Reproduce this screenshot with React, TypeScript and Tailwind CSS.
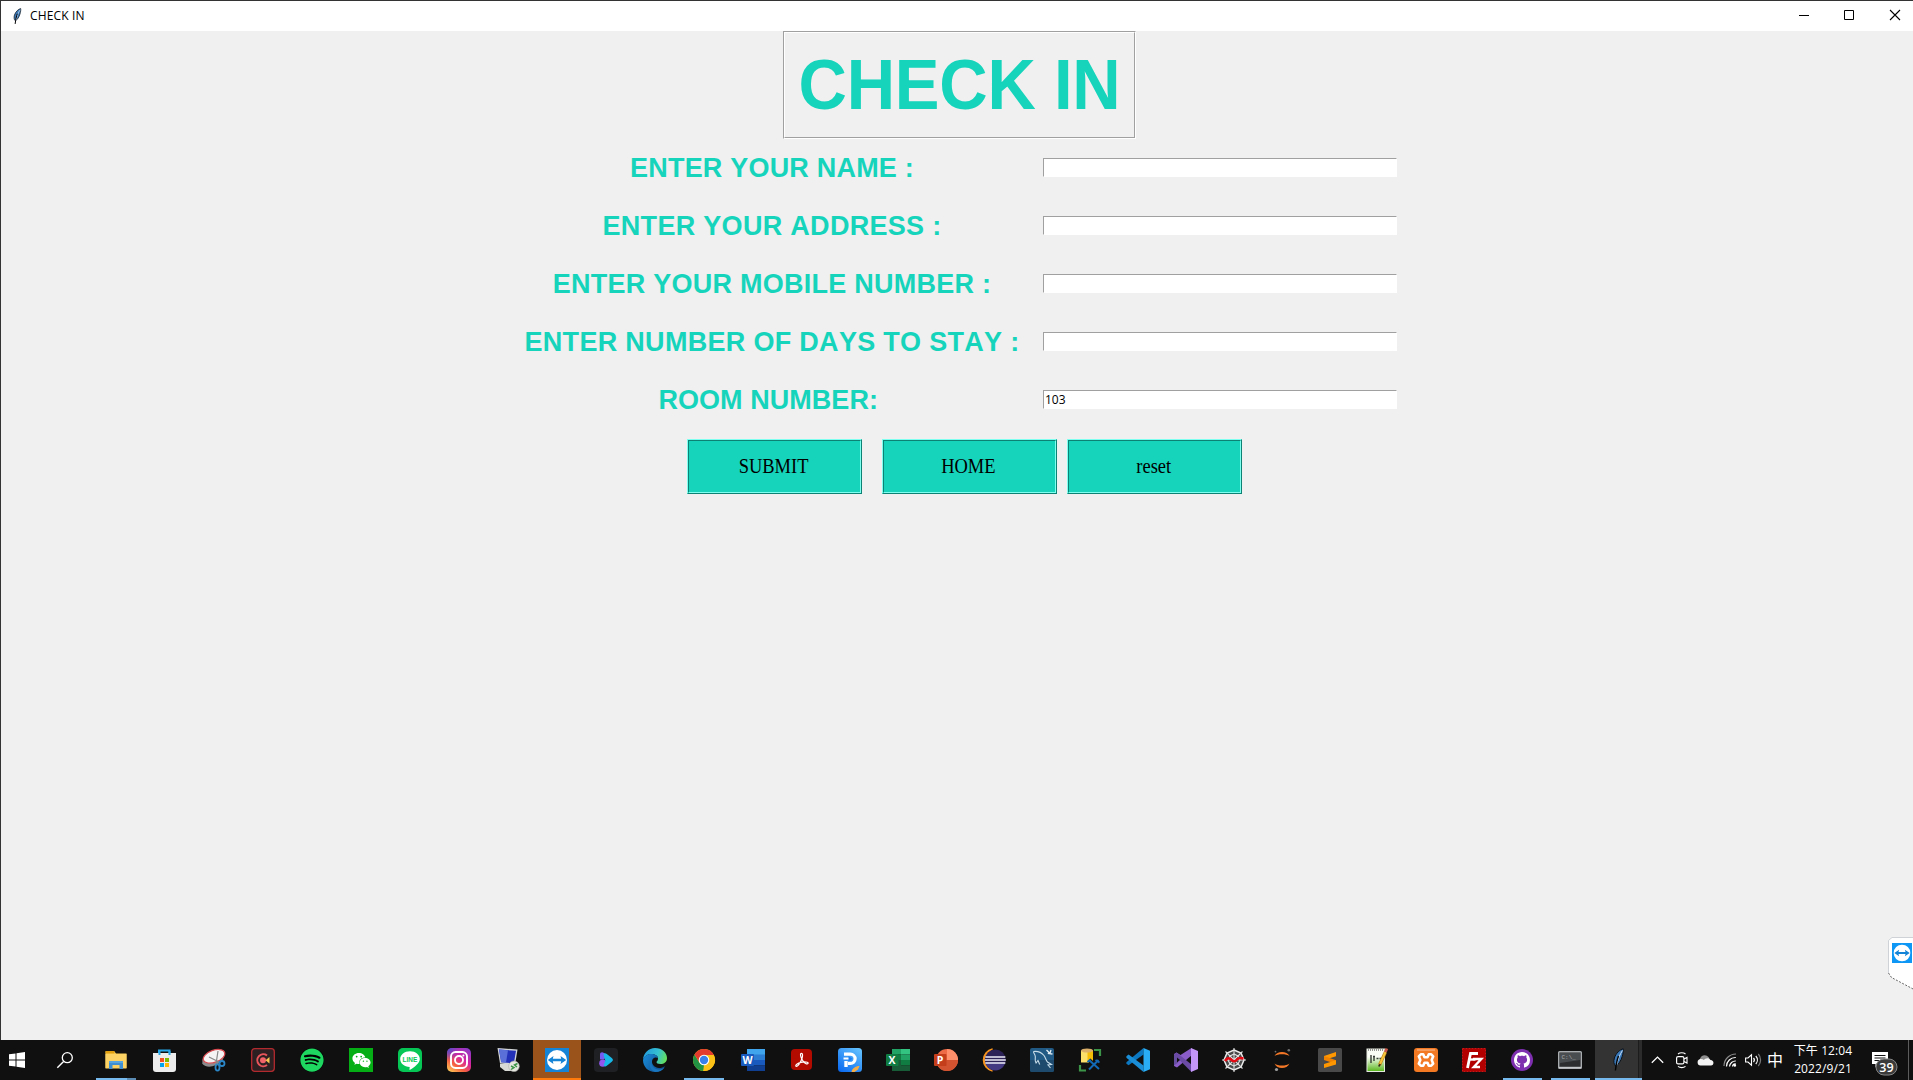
import React from "react";
import { FaSpotify, FaWeixin } from "react-icons/fa6";

const Svg = ({ children, w = 24, h = 24 }: { children: React.ReactNode; w?: number; h?: number }) => (
  <svg width={w} height={h} viewBox={`0 0 ${w} ${h}`} className="block shrink-0 overflow-visible" fill="none">
    {children}
  </svg>
);

const Feather = ({ w, h }: { w: number; h: number }) => (
  <svg width={w} height={h} viewBox="0 0 12 24" className="block shrink-0" fill="none">
    <path d="M11.2.8C8 1.6 4 5 2.4 10c-1 3.500-.6 6.500 1.200 8 3-1.200 5.400-5.500 6.600-9.500C11 5.500 11.600 3 11.200.8Z" fill="#3a78b8" stroke="#0d1218" strokeWidth="1" />
    <path d="M10.500 2.500C8 6 6 11 4.600 17.500" stroke="#cfe4f7" strokeWidth="1" />
    <path d="M6.500 8C5 12 4.200 16 3.400 22.500" stroke="#050505" strokeWidth="1.400" />
  </svg>
);

const Explorer = () => (
  <Svg>
    <path d="M1.500 3.500h9l1.500 2h10.500v14.500h-21Z" fill="#fcce56" />
    <path d="M1.500 3h9v2.500h-9Z" fill="#e0a010" />
    <path d="M1.500 6h21v14.500h-21Z" fill="#fdd265" />
    <path d="M5 21v-8h14v8h-3.500v-4h-7v4Z" fill="#3f8fd0" />
    <path d="M5 13h14v2H5Z" fill="#56a4e0" />
  </Svg>
);
const Store = () => (
  <Svg>
    <path d="M6 6V2.500h10.500V6" stroke="#26a6e8" strokeWidth="2" />
    <path d="M0 5h23v16a3 3 0 0 1-3 3H3a3 3 0 0 1-3-3Z" fill="#ececec" />
    <path d="M5.500 3h2v4h-2zM15.500 3h2v4h-2z" fill="#26a6e8" />
    <path d="M7 10h4v4H7z" fill="#f25022" /><path d="M12 10h4v4h-4z" fill="#7fba00" />
    <path d="M7 15h4v4H7z" fill="#00a4ef" /><path d="M12 15h4v4h-4z" fill="#ffb900" />
  </Svg>
);
const Snip = () => (
  <Svg>
    <ellipse cx="11" cy="11" rx="11.500" ry="6.800" transform="rotate(-22 11 11)" fill="#8b8b8d" />
    <ellipse cx="12" cy="8.300" rx="11.300" ry="6" transform="rotate(-20 12 8.300)" fill="#f5f3f3" stroke="#d84a50" strokeWidth="1.200" />
    <path d="m7 9 10 5M16 3l-2 13" stroke="#888" strokeWidth="1.200" />
    <circle cx="20" cy="15.500" r="2.500" stroke="#2b86c7" strokeWidth="1.800" />
    <ellipse cx="15.500" cy="19.500" rx="2" ry="3.200" stroke="#2b86c7" strokeWidth="1.800" />
  </Svg>
);
const Recorder = () => (
  <Svg>
    <rect x=".7" y=".7" width="22.600" height="22.600" rx="3" fill="#2c2022" stroke="#b32a2e" strokeWidth="1.300" />
    <path d="M16 7.500A6 6 0 1 0 16 17" stroke="#e8565c" strokeWidth="2" />
    <circle cx="12" cy="12.300" r="3" fill="#f0646a" />
    <path d="M14.500 12.300 18.500 9v6.600Z" fill="#f8c850" />
  </Svg>
);
const Spotify = () => (
  <div className="size-6 rounded-full bg-black"><FaSpotify className="size-6 text-[#1ed760]" /></div>
);
const WeChat = () => (
  <div className="flex size-6 items-center justify-center bg-[#06ae16]"><FaWeixin className="size-[19px] text-white" /></div>
);
const Line = () => (
  <Svg>
    <rect width="24" height="24" rx="5" fill="#06c755" />
    <path d="M12 3.200c5.500 0 9.800 3.500 9.800 7.900 0 4-5 8-9.700 10.700-.6.300-.8-.2-.6-1l.2-1.700C6.200 18.900 2.200 15.500 2.200 11.100c0-4.400 4.300-7.900 9.800-7.900Z" fill="#fff" />
    <text x="12" y="13.800" textAnchor="middle" fontFamily="Liberation Sans" fontWeight="700" fontSize="6.500" fill="#06c755">LINE</text>
  </Svg>
);
const Instagram = () => (
  <Svg>
    <defs>
      <linearGradient id="ig" x1="3" y1="24" x2="20" y2="0" gradientUnits="userSpaceOnUse">
        <stop offset="0" stopColor="#fec956" /><stop offset=".3" stopColor="#f56040" />
        <stop offset=".6" stopColor="#d6249f" /><stop offset="1" stopColor="#8a3ac8" />
      </linearGradient>
      <radialGradient id="igb" cx="0" cy="0" r="13" gradientUnits="userSpaceOnUse">
        <stop offset="0" stopColor="#3c55d5" /><stop offset="1" stopColor="#3c55d5" stopOpacity="0" />
      </radialGradient>
    </defs>
    <rect width="24" height="24" rx="5" fill="url(#ig)" /><rect width="24" height="24" rx="5" fill="url(#igb)" />
    <rect x="4" y="4" width="16" height="16" rx="4.500" stroke="#fff" strokeWidth="1.900" />
    <circle cx="12" cy="12" r="4" stroke="#fff" strokeWidth="1.900" /><circle cx="16.400" cy="7.600" r="1" fill="#fff" />
  </Svg>
);
const RemoteDesktop = () => (
  <Svg>
    <path d="M4 16h12l6 4-2 3H9l-5-4Z" fill="#d9d9d6" />
    <path d="m1.500 0 20 1.500-2.500 15.500L4 15.500Z" fill="#d3d6d8" />
    <path d="m3 1.500 17 1.300-2.200 12.700-12.600-1.300Z" fill="#2330b8" />
    <path d="m3 1.500 9 .7-2 12.300-4.800-.3Z" fill="#5a6fd8" />
    <circle cx="18" cy="18.300" r="5.300" fill="#e5e6df" stroke="#a9aba4" strokeWidth=".6" />
    <path d="m15 18 3 1.500-3 2M21.500 15.500l-3 1.500 2.500 2" stroke="#3d9648" strokeWidth="1.500" />
  </Svg>
);
const TeamViewer = ({ s = 24 }: { s?: number }) => (
  <svg width={s} height={s} viewBox="0 0 24 24" className="block shrink-0">
    <rect width="24" height="24" fill={s === 24 ? "#1583d6" : "#0f97f5"} /><circle cx="12" cy="12" r="10" fill="#fff" />
    <path d="m2.800 12 5.700-4-.7 2.800h8.400L15.500 8l5.700 4-5.700 4 .7-2.800H7.800l.7 2.800Z" fill="#1583d6" />
  </svg>
);
const Player = () => (
  <Svg>
    <rect width="24" height="24" rx="4" fill="#1e2023" />
    <path d="M6 6.500c0-2.300 2.200-2.800 4-1.500l3 2.500-3 4H6Z" fill="#745cf2" />
    <circle cx="8.800" cy="15.200" r="3.600" fill="#9256ee" />
    <path d="M9.500 6.500c.5-1.500 2-1.500 3.300-.5l5 4c1.500 1.200 1.500 2.600 0 3.800l-5 4c-1.300 1-2.800.8-3-1l1.500-4Z" fill="#17b8e8" />
  </Svg>
);
const Edge = () => (
  <Svg>
    <defs>
      <linearGradient id="e1" x1="2" y1="4" x2="23" y2="12" gradientUnits="userSpaceOnUse"><stop stopColor="#249edb" /><stop offset=".55" stopColor="#35c1d2" /><stop offset="1" stopColor="#66e05a" /></linearGradient>
      <linearGradient id="e2" x1="0" y1="10" x2="20" y2="22" gradientUnits="userSpaceOnUse"><stop stopColor="#1888d5" /><stop offset="1" stopColor="#114a8b" /></linearGradient>
    </defs>
    <path d="M0 12C.3 5 5.500 0 12 0c7 0 12 4.600 12 10 0 4-3 6-6.500 6-3 0-4-1-4-2 0-.7 1.500-1 1.500-3.500C15 7.500 11.500 6 8.500 6 4 6 .8 9 0 12Z" fill="url(#e1)" />
    <path d="M0 12c1-3.600 4-6 8.500-6 3.500 0 6.300 2 6.500 4.300-1-1-4-1.300-5.400 1C7.500 15 11 20 16 20c2.300 0 4.500-1 6.200-1.800C20 22 16 24 12 24 5.500 24 0 19 0 12Z" fill="url(#e2)" />
    <path d="M9 12c-2 5 2 9.500 7 9.500 2 0 4-.8 5.500-2-2 3.300-5.500 4.500-9 4.500C7 23 5 16 9 12Z" fill="#1975bd" />
  </Svg>
);
const Chrome = () => (
  <Svg>
    <circle cx="12" cy="12" r="11" fill="#fbc116" />
    <path d="M2.470 6.500 7.500 14.700 12 17l-.8 6A11 11 0 0 1 2.470 6.500Z" fill="#229342" />
    <path d="M12 7h9.800A11 11 0 0 1 11.200 23l5-8.500Z" fill="#fbc116" />
    <path d="M2.470 6.500A11 11 0 0 1 21.900 7H12l-4.500 7.500Z" fill="#e33b2e" />
    <circle cx="12" cy="12" r="5.300" fill="#fff" /><circle cx="12" cy="12" r="4.200" fill="#3a80ea" />
  </Svg>
);
const Letter = ({ c, y = 15.700, x = 6 }: { c: string; y?: number; x?: number }) => (
  <text x={x} y={y} textAnchor="middle" fontFamily="Open Sans" fontWeight="700" fontSize="10.500" fill="#fff">{c}</text>
);
const Word = () => (
  <Svg>
    <path d="M6 1h18v6H6z" fill="#41a5ee" /><path d="M6 6.500h18V12H6z" fill="#2b7cd3" />
    <path d="M6 12h18v5.500H6z" fill="#185abd" /><path d="M6 17.500h18V23H6z" fill="#103f91" />
    <rect y="6" width="13" height="12" rx="1" fill="#185abd" /><Letter c="W" x={6.500} />
  </Svg>
);
const Acrobat = () => (
  <Svg>
    <rect x="1" y="1" width="21" height="21" rx="4" fill="#b30b00" />
    <path d="M11.500 5.300c-1.800 0-.9 3.800 1 6.900 1.800 3 4.800 4.600 5.500 3.300.9-1.600-3.800-2-7-1.200-3.500.9-6 3-5 3.900 1.400 1.200 4.500-3.400 6-7.700.9-2.700.7-5.200-.5-5.200Z" stroke="#fff" strokeWidth="1.200" />
  </Svg>
);
const PdfEditor = () => (
  <Svg>
    <defs><linearGradient id="pe" x1="4" y1="24" x2="22" y2="0" gradientUnits="userSpaceOnUse"><stop stopColor="#0c6cf0" /><stop offset="1" stopColor="#66c4ff" /></linearGradient></defs>
    <rect width="24" height="24" rx="3.500" fill="url(#pe)" />
    <path d="M6 6.200h6.500a4.500 4.500 0 0 1 0 9.200H10" stroke="#fff" strokeWidth="3.200" /><path d="M8 13V19" stroke="#fff" strokeWidth="3.400" />
    <path d="M5.500 10.500H12" stroke="#fff" strokeWidth="2" /><path d="m10.500 8 4 2.800-4 2.800Z" fill="#1d7ef0" />
    <path d="M13.500 24c.5-3.500 4-6 8-6l-1.500 3.500L16.500 24Z" fill="#f6ae48" />
  </Svg>
);
const Excel = () => (
  <Svg>
    <path d="M6 1h9.500v5.500H6z" fill="#21a366" /><path d="M15 1h9v5.500h-9z" fill="#33c481" />
    <path d="M6 6.500h9V12H6z" fill="#107c41" /><path d="M15 6.500h9V12h-9z" fill="#21a366" />
    <path d="M6 12h9v11H6z" fill="#185c37" /><path d="M15 12h9v5.500h-9z" fill="#107c41" /><path d="M15 17.500h9V23h-9z" fill="#185c37" />
    <rect y="6" width="12.500" height="12" rx="1" fill="#107c41" /><Letter c="X" />
  </Svg>
);
const PowerPoint = () => (
  <Svg>
    <circle cx="13" cy="12" r="11" fill="#ed6c47" /><path d="M13 1a11 11 0 0 1 11 11H13Z" fill="#ff8f6b" />
    <path d="M2 12h22a11 11 0 0 1-22 0Z" fill="#d35230" />
    <rect y="6" width="12.500" height="12" rx="1" fill="#c43e1c" /><Letter c="P" />
  </Svg>
);
const Eclipse = () => (
  <Svg>
    <path d="M10.500.9A11.300 11.300 0 0 0 10.500 23.100A12.500 12.500 0 0 1 10.500.9Z" fill="#f7941e" stroke="#f7941e" strokeWidth="1.200" />
    <circle cx="13.300" cy="12" r="10.500" fill="#2c2255" />
    <path d="M3.300 14h20c-1.200 5-5 8.300-10 8.300s-9-3.300-10-8.300Z" fill="#433a83" />
    <path d="M3.300 9h20M2.800 12h21M3.300 15h20" stroke="#eceaf5" strokeWidth="1.400" />
  </Svg>
);
const MySql = () => (
  <Svg>
    <rect width="24" height="24" rx="2" fill="#215a84" /><path d="M0 12h24v10a2 2 0 0 1-2 2H2a2 2 0 0 1-2-2Z" fill="#1d4a6d" />
    <path d="M3.500 3.500c4-.5 8 1 10.500 4 1.500 2 2 5 3.500 6.500l4 2.500-3.500.5 2.500 3M3.500 3.500c0 2 1.500 2.500 1.800 5 .2 2.500-.8 4.500.7 6.500l2-2.500c.8 1.300 1 2.800 1.800 4" stroke="#c7dce9" strokeWidth="1.100" />
    <path d="m16.500 2 2.500 2.500-.5 1 4 .5M21 2l-1 3" stroke="#e3edf3" strokeWidth="1.300" />
  </Svg>
);
const SqlTools = () => (
  <Svg>
    <path d="M16 2h6v6M2 17v5.500h6" stroke="#3c9448" strokeWidth="2.200" />
    <path d="M3 2.500h11.500v12H3z" fill="#fde06a" /><path d="M9.500 2.500H15v12H9.500z" fill="#f5bd08" />
    <ellipse cx="9" cy="2.500" rx="6" ry="2" fill="#ddb06a" />
    <path d="m11 12 10 9M20.500 12 11 21.500M18 11.500l4 3.500" stroke="#111" strokeWidth="4" />
    <path d="m11 12 10 9M20.500 12 11 21.500M9.500 14l3-2.500M17.500 12l4 2.500" stroke="#1269b5" strokeWidth="2" />
  </Svg>
);
const VsCode = () => (
  <Svg>
    <path d="M.4 14.200 17.500 0v6.500L2.600 17.200.4 15.700Z" fill="#0c78c2" />
    <path d="M.4 8.300 2.600 6.500 17.500 17.500V24L.4 9.800Z" fill="#1a8fd8" />
    <path d="M17.500 0 24 2.800v18.400L17.500 24Z" fill="#29adf5" />
  </Svg>
);
const VisualStudio = () => (
  <Svg>
    <path d="m0 6 2.500-1.500 4 2.500 11-7v7.500L3 19.500 0 18Z" fill="#8a5cc8" />
    <path d="M0 6.500 3.500 9v6L0 17.500Z" fill="#674ea0" />
    <path d="M0 6.500 2.500 4.500 17.500 16.500V24Z" fill="#6a4aa5" />
    <path d="M17 0 24 3v18l-7 3Z" fill="#c496f8" />
    <path d="m3 9.500 3 2.500-3 2.500Z" fill="#111" />
  </Svg>
);
const Spyder = () => (
  <Svg>
    <path d="m12 2 7 3 3 7-3 7-7 3-7-3-3-7 3-7Z" fill="#484848" stroke="#ececec" strokeWidth="1.500" />
    <path d="M12 0v24M0 12h24M3.500 3.500l17 17M20.500 3.500l-17 17" stroke="#dedede" strokeWidth="1.100" />
    <path d="m12 6 4 2 2 4-2 4-4 2-4-2-2-4 2-4Z" stroke="#e4e4e4" strokeWidth="1.100" />
    <path d="M3 13c2-3 4-3.500 6-1.500s4 2.500 6 0 4-1.500 6.500-1" stroke="#e50914" strokeWidth="2.600" />
  </Svg>
);
const Jupyter = () => (
  <Svg>
    <path d="M4.500 8C7 2.500 17 2.500 19.500 8 16 5.500 8 5.500 4.500 8Z" fill="#f37726" />
    <path d="M4.500 15.500c2.500 6 12.500 6 15 0-3.500 2.800-11.500 2.800-15 0Z" fill="#f37726" />
    <circle cx="18.800" cy="2.300" r="1.300" fill="#717171" /><circle cx="6.500" cy="21.500" r="1.600" fill="#9e9e9e" /><circle cx="5.500" cy="3.600" r=".9" fill="#717171" />
  </Svg>
);
const Sublime = () => (
  <Svg>
    <rect width="24" height="24" rx="1.500" fill="#494949" />
    <path d="M18 4v4.300L6 12V8Z" fill="#ff9800" /><path d="m6 8 12 4.300V16L6 12Z" fill="#f08200" /><path d="M18 12.300v4.200L6 20v-4Z" fill="#ff9800" />
  </Svg>
);
const NotepadPP = () => (
  <Svg>
    <defs><linearGradient id="np" x1="0" y1="0" x2="0" y2="1"><stop offset=".35" stopColor="#fafdf5" /><stop offset="1" stopColor="#55b518" /></linearGradient></defs>
    <rect x="1" y="1" width="17.500" height="22.500" fill="url(#np)" stroke="#e3e9df" />
    <path d="M2 2h15" stroke="#777" strokeWidth="1.500" strokeDasharray="1 1" />
    <path d="M5 7v8M7 8.500h2M8 8v5M10.500 10.500h2M13.500 10.500h2" stroke="#363c36" strokeWidth="1.400" />
    <path d="m13.500 17 6-13" stroke="#c08a1c" strokeWidth="3.200" /><path d="m13.500 17 6-13" stroke="#f8c63c" strokeWidth="1.800" />
    <path d="m19.300 4 1.500-3.500" stroke="#c85a4c" strokeWidth="3" /><path d="m12.700 18.500 1.600-2.500" stroke="#362a1c" strokeWidth="1.500" />
  </Svg>
);
const Xampp = () => (
  <Svg>
    <rect width="24" height="24" rx="3" fill="#f37923" /><path d="M3 2h18" stroke="#f9c29a" strokeWidth="1" />
    <path d="M6.800 6.300h2.400l1.300 3h3l1.300-3h2.400l2 2-1.500 3.700 1.500 3.700-2 2h-2.400l-1.300-3h-3l-1.300 3H6.800l-2-2L6.300 12 4.800 8.300Z" stroke="#fff" strokeWidth="2.600" strokeLinejoin="round" />
  </Svg>
);
const FileZilla = () => (
  <Svg>
    <rect x=".5" y=".5" width="23" height="23" fill="#b20000" stroke="#d01212" strokeDasharray="2 1" />
    <path d="M5.500 20 8.500 5.500H16" stroke="#fff" strokeWidth="2.800" /><path d="M6.500 11.500h7" stroke="#fff" strokeWidth="2.400" />
    <path d="M11 11h8.300l-7.500 8H18" stroke="#fff" strokeWidth="2.400" />
  </Svg>
);
const GitHub = () => (
  <div className="flex size-6 items-center justify-center">
    <div className="flex size-[22px] items-center justify-center rounded-full bg-[#7d2fb0]">
      <svg width="16" height="16" viewBox="0 0 16 16"><path fill="#fff" d="M8 0C3.580 0 0 3.580 0 8c0 3.540 2.290 6.530 5.470 7.590.4.070.55-.17.55-.38 0-.19-.01-.82-.01-1.490-2.010.37-2.530-.49-2.690-.94-.09-.23-.48-.94-.82-1.130-.28-.15-.68-.52-.01-.53.63-.01 1.080.58 1.230.82.72 1.210 1.870.87 2.330.66.070-.52.280-.87.510-1.070-1.780-.2-3.640-.89-3.640-3.950 0-.87.310-1.590.82-2.150-.08-.2-.36-1.020.08-2.120 0 0 .67-.21 2.200.82.640-.18 1.320-.27 2-.27s1.360.09 2 .27c1.530-1.040 2.200-.82 2.200-.82.440 1.100.160 1.920.080 2.120.510.560.820 1.270.820 2.150 0 3.070-1.870 3.750-3.650 3.950.290.250.540.730.540 1.480 0 1.070-.01 1.930-.01 2.200 0 .210.150.460.550.380A8.010 8.010 0 0 0 16 8c0-4.420-3.580-8-8-8Z" /></svg>
    </div>
  </div>
);
const Cmd = () => (
  <Svg>
    <rect x=".7" y="3.700" width="22.600" height="16.600" rx=".8" fill="#2b2d2f" stroke="#a9acae" strokeWidth="1.400" />
    <path d="M2 5h20v7L2 15Z" fill="#4a4d50" /><path d="M1 19.500h22" stroke="#c5c8ca" strokeWidth="1.400" />
    <text x="3.500" y="11" fontFamily="Liberation Mono" fontSize="6" fill="#a8abac">C:\_</text>
  </Svg>
);
const Tk = () => <div className="flex w-6 justify-center"><Feather w={12} h={24} /></div>;

type Task = { icon: React.FC; bar?: string; bg?: string };
const wide: Task[] = [
  { icon: Store }, { icon: Snip }, { icon: Recorder }, { icon: Spotify }, { icon: WeChat }, { icon: Line },
  { icon: Instagram }, { icon: RemoteDesktop }, { icon: TeamViewer as React.FC, bar: "ml-px w-12 bg-[#ff7a0a]", bg: "bg-[linear-gradient(90deg,#101010_1px,#9b531c_1px)]" },
  { icon: Player }, { icon: Edge }, { icon: Chrome, bar: "ml-[5px] w-10 bg-[#76b9ed]" }, { icon: Word }, { icon: Acrobat },
];
const narrow: Task[] = [
  { icon: PdfEditor }, { icon: Excel }, { icon: PowerPoint }, { icon: Eclipse }, { icon: MySql }, { icon: SqlTools },
  { icon: VsCode }, { icon: VisualStudio }, { icon: Spyder }, { icon: Jupyter }, { icon: Sublime }, { icon: NotepadPP },
  { icon: Xampp }, { icon: FileZilla }, { icon: GitHub, bar: "ml-[5px] w-[39px] bg-[#76b9ed]" },
  { icon: Cmd, bar: "ml-[5px] w-[39px] bg-[#76b9ed]" },
  { icon: Tk, bar: "ml-px w-[47px] bg-[#76b9ed]", bg: "bg-[linear-gradient(90deg,#101010_1px,#333_1px,#333_44px,#1c1c1c_44px,#1c1c1c_45px,#2b2b2b_45px)]" },
];
const TaskButton = ({ t, cls }: { t: Task; cls: string }) => (
  <div className={`flex h-10 shrink-0 flex-col justify-between pt-2 ${cls} ${t.bg ?? ""}`}>
    <div className="h-6 pl-3"><t.icon /></div>
    <div className={`h-[2px] ${t.bar ?? ""}`} />
  </div>
);

const Taskbar = () => (
  <div className="flex h-10 w-full bg-[#101010]">
    <div className="flex h-10 w-[34px] shrink-0 items-center justify-center">
      <Svg w={16} h={16}><path d="M0 2.300 6.500 1.400v6.100H0ZM7.500 1.200 16 0v7.500H7.500ZM0 8.500h6.500v6.100L0 13.700ZM7.500 8.500H16V16l-8.500-1.200Z" fill="#fff" /></Svg>
    </div>
    <div className="flex h-10 w-[62px] shrink-0 items-center justify-center">
      <Svg w={16} h={16}><circle cx="10.300" cy="5.700" r="5" stroke="#fff" strokeWidth="1.300" /><path d="M6.600 9.400.3 15.700" stroke="#fff" strokeWidth="1.400" /></Svg>
    </div>
    <div className="mr-1 flex h-10 w-10 shrink-0 flex-col justify-between pt-2">
      <div className="pl-2"><Explorer /></div>
      <div className="flex h-[2px]"><div className="w-[31px] bg-[#76b9ed]" /><div className="w-[9px] bg-[#5a8cb4]" /></div>
    </div>
    {wide.map((t, i) => <TaskButton key={i} t={t} cls="w-[49px] [&>div:first-child]:pl-[13px]" />)}
    {narrow.map((t, i) => <TaskButton key={i} t={t} cls="w-12" />)}
    <div className="flex flex-1 items-center pl-[9px]">
      <Svg w={13} h={8}><path d="m.8 6.800 5.700-5.700 5.700 5.700" stroke="#fff" strokeWidth="1.300" /></Svg>
      <div className="ml-[12px]"><Svg w={12} h={16}>
        <rect x=".6" y="4.600" width="7.300" height="7.300" rx="1.500" stroke="#fff" strokeWidth="1.200" /><path d="m8 7 3-1.600v5.700L8 9.500" stroke="#fff" strokeWidth="1.100" />
        <path d="M2 2C4 .3 7.500.3 9.500 2M2 14.300c2 1.700 5.500 1.700 7.500 0" stroke="#fff" strokeWidth="1.100" />
      </Svg></div>
      <div className="ml-[9px]"><Svg w={17} h={12}>
        <path d="M3 8a5 5 0 0 1 9.500-3.500L8 9Z" fill="#8f8f8f" /><path d="M3.500 11.500a3.300 3.300 0 0 1-.3-6.500c1.500-.3 2.800.2 3.800 1 1-2 5-2.800 6.500 0 4 .2 3.800 5.500.5 5.500Z" fill="#f3f3f3" />
      </Svg></div>
      <div className="ml-[9px]"><Svg w={14} h={14}>
        <path d="M1 13A12 12 0 0 1 13 1" stroke="#8a8a8a" strokeWidth="1.200" />
        <path d="M3.500 13.500A9 9 0 0 1 12.800 4.500M6.500 13.500a6 6 0 0 1 6.300-5.500M9.500 13.500a3 3 0 0 1 3.300-2.500" stroke="#fff" strokeWidth="1.200" /><circle cx="11.800" cy="12.400" r="1.300" fill="#fff" />
      </Svg></div>
      <div className="ml-[8px]"><Svg w={17} h={14}>
        <path d="M.6 5h2.400l3.500-3.200v10.400L3 9H.6Z" stroke="#fff" strokeWidth="1.100" />
        <path d="M8.500 5a3 3 0 0 1 0 4M10.800 3a6 6 0 0 1 0 8" stroke="#fff" strokeWidth="1.200" /><path d="M13.300 1a9 9 0 0 1 0 12" stroke="#777" strokeWidth="1.200" />
      </Svg></div>
      <div className="ml-[5px] w-4 pb-[2px] font-['Noto_Sans_CJK_TC',sans-serif] text-[16px] leading-[20px] text-white">中</div>
      <div className="ml-[8px] flex w-[64px] flex-col items-center font-['Open_Sans','Noto_Sans_CJK_TC',sans-serif] text-[12px] leading-[18px] tracking-[0.1px] whitespace-nowrap text-white">
        <span>下午 12:04</span><span>2022/9/21</span>
      </div>
      <div className="ml-[17px]"><Svg w={28} h={26}>
        <path d="M0 5h16v12H7l-3.500 3.500V17H0Z" fill="#fff" /><path d="M2.500 8.500h11M2.500 11h11M2.500 13.500h7" stroke="#101010" strokeWidth="1" />
        <rect x="4" y="12" width="21" height="16" rx="8" fill="#3b3b3b" stroke="#858585" />
        <text x="14.500" y="24.500" textAnchor="middle" fontFamily="Open Sans" fontWeight="600" fontSize="12.500" fill="#fff">39</text>
      </Svg></div>
      <div className="mr-1 ml-auto h-10 w-px bg-[#5c5c5c]" />
    </div>
  </div>
);

const rows = [
  { label: "ENTER YOUR NAME :", value: "", ls: "tracking-[0.2px]" },
  { label: "ENTER YOUR ADDRESS :", value: "", ls: "tracking-[0.3px]" },
  { label: "ENTER YOUR MOBILE NUMBER :", value: "", ls: "tracking-[0.25px]" },
  { label: "ENTER NUMBER OF DAYS TO STAY :", value: "", ls: "tracking-[0.3px]" },
  { label: "ROOM NUMBER:\u00a0", value: "103", ls: "tracking-[0.05px]" },
];

const RidgeButton = ({ text, cls }: { text: string; cls: string }) => (
  <button className={`h-[55px] w-[175px] border border-t-[#7ffff0] border-r-[#0b8273] border-b-[#0b8273] border-l-[#7ffff0] bg-[#16d4bc] ${cls}`}>
    <span className="flex h-full w-full items-center justify-center border border-t-[#0b8273] border-r-[#7ffff0] border-b-[#7ffff0] border-l-[#0b8273] pr-[2px] pb-[2px] font-['Liberation_Serif',serif] text-[22px] leading-none text-black">
      <span className="scale-x-[0.84] whitespace-nowrap">{text}</span>
    </span>
  </button>
);

export default function App() {
  return (
    <div className="relative flex h-[1080px] w-[1913px] flex-col overflow-hidden bg-[#f0f0f0]">
      <div className="flex min-h-0 flex-1 flex-col border-t border-l border-[#333]">
        <header className="flex h-[30px] shrink-0 items-center bg-white pl-[11px]">
          <Feather w={10} h={17} />
          <span className="ml-2 font-['Open_Sans',sans-serif] text-[12px] leading-[16px] tracking-[0.15px] text-black">CHECK IN</span>
          <div className="mr-[13px] ml-auto flex items-center pb-[2px]">
            <Svg w={10} h={10}><path d="M0 5.500h10" stroke="#000" /></Svg>
            <div className="ml-[35px]"><Svg w={10} h={10}><path d="M.5.5h9v9h-9Z" stroke="#000" /></Svg></div>
            <div className="ml-[36px]"><Svg w={10} h={10}><path d="m0 0 10 10M10 0 0 10" stroke="#000" strokeWidth="1.100" /></Svg></div>
          </div>
        </header>
        <main className="flex flex-1 flex-col">
          <div className="ml-[782px] h-[108px] w-[353px] border border-t-[#a0a0a0] border-r-white border-b-white border-l-[#a0a0a0]">
            <h1 className="flex h-full items-center justify-center border border-t-white border-r-[#a0a0a0] border-b-[#a0a0a0] border-l-white pb-[2px] font-['Liberation_Sans',sans-serif] text-[67px] leading-none font-bold tracking-[-0.25px] whitespace-nowrap text-[#16d4bc]">
              <span className="scale-y-[1.04]">CHECK IN</span>
            </h1>
          </div>
          <div className="-mt-px ml-[520px] flex flex-col">
            {rows.map((r) => (
              <label key={r.label} className="flex h-[58px] items-center">
                <span className={`mt-[2px] flex w-[502px] shrink-0 scale-y-[1.04] justify-center font-['Liberation_Sans',sans-serif] text-[27px] leading-[30px] font-bold whitespace-nowrap text-[#16d4bc] [font-kerning:none] ${r.ls}`}>{r.label}</span>
                <input
                  defaultValue={r.value}
                  className="ml-5 h-[19px] w-[354px] border border-t-[#a0a0a0] border-r-white border-b-white border-l-[#a0a0a0] bg-white px-px font-['Open_Sans',sans-serif] text-[12px] leading-[17px] text-black outline-none"
                />
              </label>
            ))}
          </div>
          <div className="mt-[11px] ml-[686px] flex">
            <RidgeButton text="SUBMIT" cls="" />
            <RidgeButton text="HOME" cls="ml-5" />
            <RidgeButton text="reset" cls="ml-[10px]" />
          </div>
        </main>
      </div>
      <Taskbar />
      <div className="absolute top-[937px] left-[1888px] h-[54px] w-[25px]">
        <svg width="25" height="54" viewBox="0 0 25 54" className="absolute inset-0">
          <path d="M26 .5H4L.5 3.500V36l3 4.500L26 52.500Z" fill="#fff" />
          <path d="M26 .5H4L.5 3.500V36" fill="none" stroke="#cfd2d6" />
          <path d="M.5 36l3 4.500L26 52.500" fill="none" stroke="#666" strokeDasharray="2 1.500" />
        </svg>
        <div className="absolute top-[6px] left-1"><TeamViewer s={20} /></div>
      </div>
    </div>
  );
}
